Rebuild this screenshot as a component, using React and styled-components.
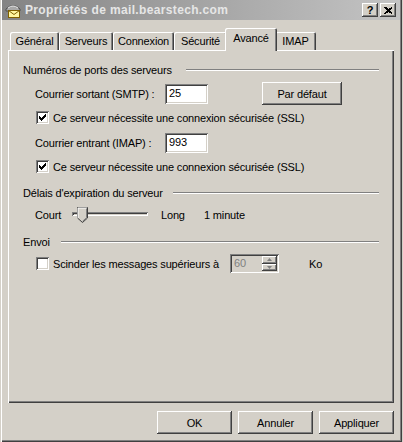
import { createGlobalStyle, styled } from 'styled-components';

const GlobalStyle = createGlobalStyle`
  html, body {
    margin: 0;
    padding: 0;
    background: #d4d0c8;
  }
  body {
    font-family: "Liberation Sans", Arial, sans-serif;
    font-size: 11px;
    letter-spacing: -0.16px;
    color: #000;
  }
`;

const raised = `
  box-shadow: inset -1px -1px #404040, inset 1px 1px #ffffff,
    inset -2px -2px #808080, inset 2px 2px #d4d0c8;
`;

const sunken = `
  box-shadow: inset 1px 1px #808080, inset -1px -1px #ffffff,
    inset 2px 2px #404040, inset -2px -2px #d4d0c8;
`;

const Window = styled.div`
  width: 402px;
  height: 442px;
  box-sizing: border-box;
  padding: 0 2px 2px 2px;
  background: #d4d0c8;
  display: flex;
  flex-direction: column;
  box-shadow: inset 1px 0 #d4d0c8, inset 2px 0 #ffffff, inset -1px -1px #404040,
    inset -2px -2px #808080;
`;

const TitleBar = styled.div`
  height: 20px;
  margin-bottom: 1px;
  display: flex;
  align-items: center;
  padding: 0 4px 0 2px;
  background: linear-gradient(to right, #848484, #c4c4c4);
`;

const Title = styled.span`
  flex: 1;
  margin-left: 3px;
  font-weight: bold;
  font-size: 12px;
  letter-spacing: 0.35px;
  color: #e6e6e6;
  white-space: nowrap;
`;

const CapButtons = styled.div`
  display: flex;
  gap: 2px;
`;

const CapButton = styled.div`
  width: 16px;
  height: 14px;
  background: #d4d0c8;
  display: flex;
  align-items: center;
  justify-content: center;
  font-weight: bold;
  font-size: 11px;
  line-height: 14px;
  ${raised}
`;

const Body = styled.div`
  flex: 1;
  display: flex;
  flex-direction: column;
  padding: 7px 6px 6px 6px;
`;

const TabStrip = styled.div`
  height: 22px;
  display: flex;
  align-items: flex-end;
  padding-left: 2px;
  position: relative;
  z-index: 1;
`;

const Tab = styled.div`
  box-sizing: border-box;
  width: ${(p) => p.$w}px;
  height: ${(p) => (p.$active ? 23 : 18)}px;
  margin: 0 ${(p) => (p.$active ? -2 : 0)}px ${(p) => (p.$active ? -1 : 0)}px;
  padding-top: ${(p) => (p.$active ? 4 : 3)}px;
  text-align: center;
  background: #d4d0c8;
  border-radius: 2px 2px 0 0;
  position: relative;
  z-index: ${(p) => (p.$active ? 2 : 1)};
  box-shadow: inset 1px 1px #ffffff, inset -1px 0 #404040, inset -2px 0 #808080;
  white-space: nowrap;
`;

const Page = styled.div`
  flex: 1;
  padding: 14px 15px 0 15px;
  box-shadow: inset 1px 1px #ffffff, inset -1px -1px #404040,
    inset -2px -2px #808080;
`;

const GroupHead = styled.div`
  display: flex;
  align-items: center;
  height: 13px;
  line-height: 13px;
  margin-top: ${(p) => p.$mt || 0}px;
`;

const Rule = styled.div`
  flex: 1;
  height: 0;
  margin: -2px 0 0 ${(p) => p.$gap}px;
  border-top: 1px solid #808080;
  border-bottom: 1px solid #ffffff;
`;

const Row = styled.div`
  display: flex;
  align-items: center;
  height: ${(p) => p.$h}px;
  margin-top: ${(p) => p.$mt}px;
  padding-left: 12px;
  white-space: nowrap;
`;

const FieldLabel = styled.span`
  width: ${(p) => p.$w}px;
  margin-left: ${(p) => p.$ml || 0}px;
`;

const TextField = styled.div`
  box-sizing: border-box;
  width: 43px;
  height: 20px;
  padding: 3px 0 0 4px;
  background: #ffffff;
  ${sunken}
`;

const Button = styled.div`
  box-sizing: border-box;
  width: ${(p) => p.$w}px;
  height: 23px;
  margin-left: ${(p) => p.$ml || 0}px;
  display: flex;
  align-items: center;
  justify-content: center;
  background: #d4d0c8;
  ${raised}
`;

const Box = styled.div`
  box-sizing: border-box;
  width: 13px;
  height: 13px;
  margin: 0 4px 0 1px;
  background: #ffffff;
  ${sunken}
`;

const Slider = styled.div`
  position: relative;
  width: 76px;
  height: 16px;
`;

const Track = styled.div`
  position: absolute;
  left: 0;
  right: 0;
  top: 5px;
  height: 4px;
  ${sunken}
`;

const Thumb = styled.svg`
  position: absolute;
  top: 0;
`;

const Spin = styled.div`
  box-sizing: border-box;
  width: 49px;
  height: 19px;
  display: flex;
  padding: 2px;
  background: #d4d0c8;
  ${sunken}
`;

const SpinValue = styled.span`
  flex: 1;
  padding: 1px 0 0 2px;
  color: #808080;
`;

const SpinArrows = styled.div`
  width: 15px;
  display: flex;
  flex-direction: column;
`;

const SpinArrow = styled.div`
  flex: 1;
  display: flex;
  align-items: center;
  justify-content: center;
  background: #d4d0c8;
  ${raised}
`;

const Footer = styled.div`
  display: flex;
  justify-content: flex-end;
  gap: 6px;
  padding-top: 8px;
`;

const Check = () => (
  <svg width="13" height="13" shapeRendering="crispEdges">
    <polygon points="3,5 5,7 10,2 10,5 5,10 3,8" fill="#000" />
  </svg>
);

const MailIcon = () => (
  <svg width="18" height="16" viewBox="0 0 18 16">
    <path d="M2 7 Q9 0 16 7 L16 9 L2 9 Z" fill="#a8a8a8" stroke="#505050" strokeWidth="1" />
    <path d="M4 6 Q9 2 14 6" fill="none" stroke="#e8e8e8" strokeWidth="1" />
    <rect x="4.5" y="8.5" width="11" height="7" fill="#fff8a0" stroke="#806000" />
    <path d="M4.5 8.5 L10 12.5 L15.5 8.5" fill="none" stroke="#806000" />
  </svg>
);

const tabs = [
  { label: 'Général', w: 49 },
  { label: 'Serveurs', w: 54 },
  { label: 'Connexion', w: 61 },
  { label: 'Sécurité', w: 53 },
  { label: 'Avancé', w: 52, active: true },
  { label: 'IMAP', w: 41 },
];

// timeout slider position, 0..1
const timeout = 0;

export default function App() {
  return (
    <>
      <GlobalStyle />
      <Window>
        <TitleBar>
          <MailIcon />
          <Title>Propriétés de mail.bearstech.com</Title>
          <CapButtons>
            <CapButton>?</CapButton>
            <CapButton>
              <svg width="8" height="7" shapeRendering="crispEdges">
                <path d="M0 0 L8 7 M1 0 L8 6 M0 7 L8 0 M1 7 L8 1" stroke="#000" strokeWidth="1.2" />
              </svg>
            </CapButton>
          </CapButtons>
        </TitleBar>
        <Body>
          <TabStrip>
            {tabs.map((t) => (
              <Tab key={t.label} $w={t.w} $active={t.active}>
                {t.label}
              </Tab>
            ))}
          </TabStrip>
          <Page>
            <GroupHead>
              Numéros de ports des serveurs
              <Rule $gap={14} />
            </GroupHead>
            <Row $h={23} $mt={5}>
              <FieldLabel $w={130}>Courrier sortant (SMTP) :</FieldLabel>
              <TextField>25</TextField>
              <Button $w={80} $ml={54}>Par défaut</Button>
            </Row>
            <Row $h={13} $mt={6}>
              <Box><Check /></Box>
              Ce serveur nécessite une connexion sécurisée (SSL)
            </Row>
            <Row $h={20} $mt={9}>
              <FieldLabel $w={130}>Courrier entrant (IMAP) :</FieldLabel>
              <TextField>993</TextField>
            </Row>
            <Row $h={13} $mt={7}>
              <Box><Check /></Box>
              Ce serveur nécessite une connexion sécurisée (SSL)
            </Row>

            <GroupHead $mt={14}>
              Délais d'expiration du serveur
              <Rule $gap={10} />
            </GroupHead>
            <Row $h={16} $mt={7}>
              <FieldLabel $w={37}>Court</FieldLabel>
              <Slider>
                <Track />
                <Thumb width="11" height="16" style={{ left: 5 + timeout * 60 }}>
                  <path d="M0.5 0.5 H10.5 V11 L5.5 15.5 L0.5 11 Z" fill="#d4d0c8" stroke="#404040" />
                  <path d="M1 11 V1 H10" fill="none" stroke="#ffffff" />
                  <path d="M9.5 1.5 V10.7 L5.5 14.3" fill="none" stroke="#808080" />
                </Thumb>
              </Slider>
              <FieldLabel $w={43} $ml={13}>Long</FieldLabel>
              <span>1 minute</span>
            </Row>

            <GroupHead $mt={13}>
              Envoi
              <Rule $gap={11} />
            </GroupHead>
            <Row $h={19} $mt={5}>
              <Box />
              <FieldLabel $w={177}>Scinder les messages supérieurs à</FieldLabel>
              <Spin>
                <SpinValue>60</SpinValue>
                <SpinArrows>
                  <SpinArrow>
                    <svg width="5" height="3"><path d="M2.5 0 L5 3 L0 3 Z" fill="#808080" /></svg>
                  </SpinArrow>
                  <SpinArrow>
                    <svg width="5" height="3"><path d="M0 0 L5 0 L2.5 3 Z" fill="#808080" /></svg>
                  </SpinArrow>
                </SpinArrows>
              </Spin>
              <FieldLabel $ml={30}>Ko</FieldLabel>
            </Row>
          </Page>
          <Footer>
            <Button $w={75}>OK</Button>
            <Button $w={75}>Annuler</Button>
            <Button $w={75}>Appliquer</Button>
          </Footer>
        </Body>
      </Window>
    </>
  );
}
